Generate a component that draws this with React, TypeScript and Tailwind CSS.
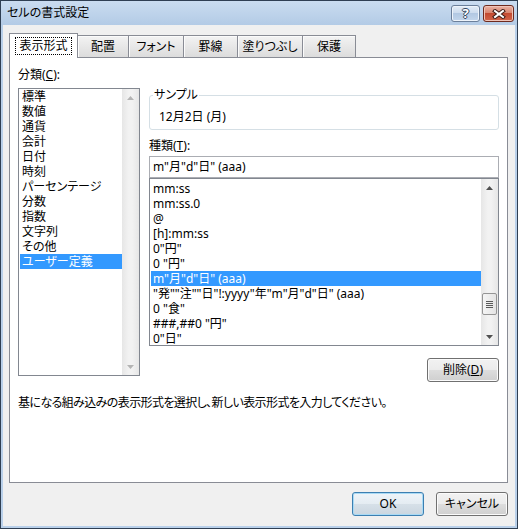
import type { ReactNode } from 'react';

const categories = ['標準', '数値', '通貨', '会計', '日付', '時刻', 'パーセンテージ', '分数', '指数', '文字列', 'その他', 'ユーザー定義'];

const formats = [
  'mm:ss',
  'mm:ss.0',
  '@',
  '[h]:mm:ss',
  '0"円"',
  '0 "円"',
  'm"月"d"日" (aaa)',
  '"発""注""日"!:yyyy"年"m"月"d"日" (aaa)',
  '0 "食"',
  '###,##0 "円"',
  '0"日"',
];

const tabs = [
  { label: '配置', w: 'w-[51px]' },
  { label: 'フォント', w: 'w-[55px]' },
  { label: '罫線', w: 'w-[54px]' },
  { label: '塗りつぶし', w: 'w-[65px]' },
  { label: '保護', w: 'w-[53px]' },
];

// 小さな三角（スクロールバーの矢印）
const Arrow = ({ up, disabled }: { up?: boolean; disabled?: boolean }) => (
  <div className="h-[17px] flex items-center justify-center">
    <svg width="7" height="4" viewBox="0 0 7 4">
      <polygon points={up ? '0,4 7,4 3.5,0' : '0,0 7,0 3.5,4'} fill={disabled ? '#b4b4b4' : '#505050'} />
    </svg>
  </div>
);

const Button = ({ children, primary }: { children: ReactNode; primary?: boolean }) => (
  <div
    className={
      primary
        ? 'w-[72px] h-[24px] flex items-center justify-center rounded-[3px] border border-[#3c7fb1] shadow-[inset_0_0_0_1px_#a8daf5] bg-[linear-gradient(#eef4f9_0%,#e4ecf2_50%,#d6e0e8_51%,#cad6e0_100%)]'
        : 'w-[72px] h-[24px] flex items-center justify-center rounded-[3px] border border-[#707070] shadow-[inset_0_0_0_1px_#fbfbfb] bg-[linear-gradient(#f2f2f2_0%,#ebebeb_50%,#dddddd_51%,#cfcfcf_100%)]'
    }
  >
    {children}
  </div>
);

const App = () => {
  return (
    <div className="w-[518px] h-[529px] font-['Noto_Sans','Noto_Sans_CJK_JP',sans-serif] text-[12px] text-black [font-feature-settings:'palt']">
      <div className="w-full h-full flex flex-col border border-[#2f3f53] bg-[#b9d0ea]">
        {/* タイトルバー */}
        <div className="h-[24px] flex items-start pl-[6px] pr-[3px] bg-linear-to-b from-[#cadcf0] to-[#b3cbe6]">
          <div className="leading-[24px] flex-1">セルの書式設定</div>
          <div className="flex gap-[3px] pt-[4px]">
            <div className="w-[29px] h-[17px] flex items-center justify-center rounded-[3px] border border-[#6b7f9a] bg-[linear-gradient(#e3edf7_0%,#cddcee_45%,#b2c8e2_50%,#c3d6ec_100%)] shadow-[inset_0_0_0_1px_#eef4fb]">
              <span className="text-white font-bold text-[13px] leading-none [text-shadow:1px_0_#34475f,-1px_0_#34475f,0_1px_#34475f,0_-1px_#34475f]">?</span>
            </div>
            <div className="w-[31px] h-[17px] flex items-center justify-center rounded-[3px] border border-[#6e2a1e] bg-[linear-gradient(#eab2a4_0%,#d98670_45%,#c34a30_50%,#d2654a_100%)] shadow-[inset_0_0_0_1px_#f0c4b8]">
              <svg width="14" height="10" viewBox="0 0 14 10">
                <path d="M3 2 L11 8 M11 2 L3 8" stroke="#3c1a14" strokeWidth="4" strokeLinecap="square" />
                <path d="M3 2 L11 8 M11 2 L3 8" stroke="#ffffff" strokeWidth="2" strokeLinecap="square" />
              </svg>
            </div>
          </div>
        </div>

        {/* 本体 */}
        <div className="flex-1 mx-[2px] mb-[2px] bg-[#f0f0f0] pt-[8px] pl-[6px] pr-[7px]">
          {/* タブ */}
          <div className="flex items-end">
            <div className="relative z-10 w-[69px] h-[25px] -mb-[1px] border border-b-0 border-[#898c95] bg-white flex items-start justify-center pt-[3px]">
              <span className="border border-dotted border-black px-[3px] leading-[16px]">表示形式</span>
            </div>
            {tabs.map((tab) => (
              <div
                key={tab.label}
                className={`${tab.w} h-[22px] border-t border-r border-[#898c95] bg-linear-to-b from-[#f3f3f3] to-[#dcdcdc] shadow-[inset_1px_1px_0_#fbfbfb] flex items-center justify-center`}
              >
                {tab.label}
              </div>
            ))}
          </div>

          {/* タブパネル */}
          <div className="h-[426px] border border-[#898c95] bg-white px-[8px] pt-[9px]">
            <div className="flex gap-[9px]">
              {/* 分類 */}
              <div className="w-[122px]">
                <div className="h-[16px] leading-[16px]">
                  分類(<span className="underline">C</span>):
                </div>
                <div className="mt-[5px] h-[288px] border border-[#828790] flex">
                  <div className="flex-1 pl-[1px]">
                    {categories.map((c, i) => (
                      <div
                        key={c}
                        className={
                          i === categories.length - 1
                            ? 'h-[15px] leading-[15px] pl-[2px] bg-[#3399ff] text-white'
                            : 'h-[15px] leading-[15px] pl-[2px]'
                        }
                      >
                        {c}
                      </div>
                    ))}
                  </div>
                  <div className="w-[17px] flex flex-col bg-[linear-gradient(90deg,#e6e6e6,#f2f2f2_40%,#f2f2f2_60%,#e6e6e6)]">
                    <Arrow up disabled />
                    <div className="flex-1" />
                    <Arrow disabled />
                  </div>
                </div>
              </div>

              {/* 右側 */}
              <div className="flex-1">
                <fieldset className="mt-[21px] border border-[#d5dfe5] rounded-[3px] pb-[5px]">
                  <legend className="ml-[3px] px-[1px] leading-[14px]">サンプル</legend>
                  <div className="pl-[9px] pt-[8px] leading-[14px]">12月2日 (月)</div>
                </fieldset>

                <div className="mt-[9px] leading-[14px]">
                  種類(<span className="underline">T</span>):
                </div>
                <div className="mt-[3px] h-[22px] border border-[#abadb3] pl-[3px] leading-[20px]">
                  m"月"d"日" (aaa)
                </div>
                <div className="h-[168px] border border-[#828790] flex">
                  <div className="flex-1 pl-[1px] pt-[2px] overflow-hidden">
                    {formats.map((f, i) => (
                      <div
                        key={f}
                        className={
                          i === 6
                            ? 'h-[15px] leading-[15px] pl-[2px] bg-[#3399ff] text-white whitespace-nowrap'
                            : 'h-[15px] leading-[15px] pl-[2px] whitespace-nowrap'
                        }
                      >
                        {f}
                      </div>
                    ))}
                  </div>
                  <div className="w-[17px] flex flex-col bg-[linear-gradient(90deg,#e6e6e6,#f2f2f2_40%,#f2f2f2_60%,#e6e6e6)]">
                    <Arrow up />
                    <div className="flex-1 pt-[97px]">
                      <div className="h-[22px] mx-[1px] rounded-[2px] border border-[#959595] bg-[linear-gradient(90deg,#f5f5f5,#e4e4e4)] flex flex-col items-center justify-center gap-[1px]">
                        <div className="w-[7px] h-[1px] bg-[#5a5a5a]" />
                        <div className="w-[7px] h-[1px] bg-[#5a5a5a]" />
                        <div className="w-[7px] h-[1px] bg-[#5a5a5a]" />
                        <div className="w-[7px] h-[1px] bg-[#5a5a5a]" />
                      </div>
                    </div>
                    <Arrow />
                  </div>
                </div>
                <div className="flex justify-end mt-[12px]">
                  <Button>
                    削除(<span className="underline">D</span>)
                  </Button>
                </div>
              </div>
            </div>

            <div className="mt-[14px] leading-[14px] tracking-[-0.6px]">
              基になる組み込みの表示形式を選択し、新しい表示形式を入力してください。
            </div>
          </div>

          {/* ボタン */}
          <div className="flex justify-end gap-[12px] mt-[9px]">
            <Button primary>OK</Button>
            <Button>キャンセル</Button>
          </div>
        </div>
      </div>
    </div>
  );
};

export default App;
